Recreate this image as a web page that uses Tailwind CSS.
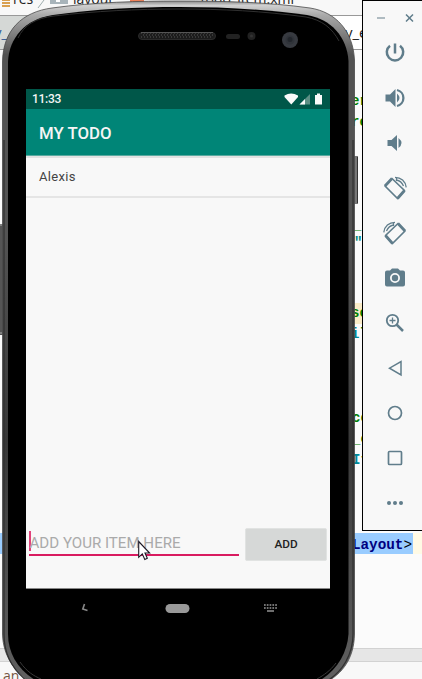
<!DOCTYPE html>
<html lang="en">
<head>
<meta charset="utf-8">
<title>My Todo</title>
<script src="https://cdn.jsdelivr.net/npm/@tailwindcss/browser@4"></script>
</head>
<body class="relative h-[679px] w-[422px] overflow-hidden bg-[#f8f8f8]">

<!-- Code editor window -->
<section class="absolute inset-0 flex flex-col overflow-hidden bg-[#fbfbfb]">
  <div class="relative h-4 shrink-0 border-b border-[#999] bg-[#f8f8f8] font-['Open_Sans',sans-serif] text-[15px] leading-5 text-[#222]">
    <svg class="absolute left-0 top-0" width="150" height="16">
      <path d="M2 0h8M2 3h8M2 6h8" stroke="#d9a050" stroke-width="2"/>
      <path d="M44 0l-6 8" stroke="#9eacad"/>
      <path d="M50 0h18v4H50z" fill="#a8b4ba"/><path d="M56 0h4v2h-4z" fill="#fff"/>
      <path d="M130 0h14v3h-14z" fill="#ee8058"/>
    </svg>
    <span class="absolute -top-[11px] left-[13px] text-[14px]">res</span>
    <span class="absolute -top-[11px] left-[73px] text-[14px]">layout</span>
    <span class="absolute -top-[11px] right-[128px] text-[14px]">todo_item.xml</span>
  </div>
  <div class="flex h-[34px] shrink-0 justify-between border-b border-[#999] bg-white font-['Open_Sans',sans-serif] text-[15px] leading-[33px] text-[#222]">
    <div class="w-40 bg-[#d5d8d6]"><span class="-ml-[6px] text-[#345e98]">y_</span></div>
    <span class="w-[77px]">y_e</span>
  </div>
  <div class="grow font-['Liberation_Mono',monospace] text-[14px] font-bold leading-[21px] text-[#008000]">
    <div class="pt-[41px] *:h-[21px] *:pl-[354px]">
      <div class="-ml-[3px]">er</div>
      <div class="-ml-[3px]">re</div>
      <div></div><div></div><div></div><div></div>
      <div class="-mt-[6px] mb-[1px] -ml-[1px] pt-[4px]">_l</div>
      <div class="mt-0 text-[#00887f]">"</div>
      <div></div><div class="mb-[7px]"></div>
      <div class="bg-[#faecc8]"><span class="-ml-[3px]">sc</span></div>
      <div><span class="-ml-[3px] text-[#008899]">i</span>l</div>
      <div></div><div></div><div></div>
      <div class="-ml-[2px]">cc</div>
      <div class="-ml-[2px]">_c</div>
      <div class="-ml-[2px]"><span class="text-[#008899]">I</span><span class="text-[#92960b]">t</span></div>
    </div>
  </div>
  <div class="absolute left-0 top-[533px] flex h-[21px] w-full bg-[#fffae5]">
    <div class="w-[413px] bg-[#99ccff] pr-px text-right font-['Liberation_Mono',monospace] text-[14.3px] leading-[24px] font-bold text-[#000080]">Layout<span class="font-normal text-black">&gt;</span></div>
  </div>
  <div class="h-[14px] shrink-0 border-y border-[#d2d2d2] bg-[#e6e6e6]"></div>
  <div class="h-[17px] shrink-0 bg-[#f8f8f8] pl-[3px] pt-[4px] font-['Open_Sans',sans-serif] text-[14px] leading-5 text-[#765743]">an</div>
</section>

<!-- Device frame -->
<svg class="absolute inset-0" width="422" height="679" viewBox="0 0 422 679">
  <defs>
    <linearGradient id="rim" x1="0" y1="0" x2="0" y2="679" gradientUnits="userSpaceOnUse">
      <stop offset="0" stop-color="#777"/><stop offset=".008" stop-color="#d0d0d0"/><stop offset=".022" stop-color="#aaa"/><stop offset=".08" stop-color="#535353"/>
      <stop offset=".35" stop-color="#535353"/><stop offset=".65" stop-color="#383838"/><stop offset="1" stop-color="#606060"/>
    </linearGradient>
    <pattern id="mesh" width="3" height="4" patternUnits="userSpaceOnUse"><path d="M0 0h1v2H0zM2 2h1v2H2z" fill="#383838"/></pattern>
  </defs>
  <path d="M0 224h3v111H0z" fill="#555"/><path d="M0 225h2M0 333h2" stroke="#aaa"/>
  <path d="M354 156h4v48h-4z" fill="#777"/><path d="M357.500 157v46" stroke="#333"/>
  <path d="M2.500 62C3 30 22 12 52 8C95 2 139 1 179 1C222 1 267 2 310 8C336 12 353 31 354.500 60V634C354 660 341 677 318 686H38C15 675 3 656 2.500 634Z" fill="url(#rim)" stroke="#4a4a4a" stroke-width=".8"/>
  <path d="M4 140V634C4 655 13 670 27 681M353 140V634C353 655 342 672 327 681" fill="none" stroke="#303030" stroke-width="1.200"/>
  <path d="M8 62C9 38 25 19 53 15C96 9 136 7 179 7C222 7 263 9 307 15C331 19 347 37 348.500 61V634C347 655 335 674 313 684H43C20 674 8 655 8 634Z" fill="#000"/>
  <path d="M18 38C24 25 36 18 54 16C96 11 136 9 179 9C222 9 263 11 306 17C322 20 332 28 339 41" fill="none" stroke="#303030"/>
  <path d="M20 662C27 672 34 676 41 679M336 663C330 671 324 675 317 679" fill="none" stroke="#393939"/>
  <rect x="138.500" y="32.500" width="77" height="7" rx="3.500" fill="#1c1c1c" stroke="#2b2b2b"/><rect x="141" y="33" width="72" height="5" fill="url(#mesh)"/>
  <path d="M141 32.500h72" stroke="#555"/>
  <rect x="226" y="34" width="14" height="5" rx="2.500" fill="#222"/><circle cx="251.500" cy="36" r="4" fill="#222"/><circle cx="251.500" cy="36" r="1.500" fill="#333"/>
  <circle cx="290" cy="40" r="8" fill="#373a40"/><circle cx="290" cy="40" r="4.500" fill="#30343a"/><circle cx="290" cy="39.500" r="2.500" fill="#22262c"/>
  <path d="M84.500 604L82.800 609L87.500 610.500" fill="none" stroke="#888" stroke-width="1.600"/>
  <rect x="165.500" y="604" width="24" height="9" rx="4.500" fill="#999"/>
  <path d="M264 605h13M264 608h13" stroke="#999" stroke-width="1.700" stroke-dasharray="1.700 1.100"/><path d="M267 611h7" stroke="#aaa" stroke-width="1.300"/>
</svg>

<!-- App screen -->
<main class="absolute left-[26px] top-[89px] flex h-[500px] w-[304px] flex-col border-b border-[#888] bg-[#f8f8f8] font-['Roboto',sans-serif]">
  <div class="flex h-5 shrink-0 items-center justify-between bg-[#005749] pl-[6px] pr-[7px] text-[12px] font-medium text-[#f5f5f5]">
    <span class="tracking-[-.3px]">11:33</span>
    <svg width="39" height="12" viewBox="0 0 39 12">
      <path d="M.5 2.500Q7-1.500 14 2.500V4L7.300 11.500L.5 4Z" fill="#fafafa"/>
      <path d="M26 1V11.500H15.500Z" fill="#5d8f85"/><path d="M21 6V11.500H15.500Z" fill="#fafafa"/>
      <path d="M31 2h2V.500h3V2h2v9.500h-7z" fill="#fafafa"/>
    </svg>
  </div>
  <header class="flex h-[47px] shrink-0 items-center border-b border-[#59aaa0] bg-[#008577] pl-[13px] pt-[3px] text-[16.8px] font-medium text-[#f5f5f5]">MY TODO</header>
  <div class="flex h-[42px] shrink-0 items-center border-t-2 border-b-2 border-t-[#e2e2e2] border-b-[#e5e5e5] pl-[13px] text-[13px] tracking-[.3px] text-[#444]">Alexis</div>
  <div class="grow"></div>
  <div class="mb-[27px] flex h-[33px] shrink-0 gap-[6px] pl-[3px] pr-[3px]">
    <div class="mb-[5px] flex grow items-center border-b-2 border-[#d91b60]">
      <span class="mr-[-1px] h-5 w-[1.5px] bg-[#e2427a]"></span>
      <span class="whitespace-nowrap pt-[4px] text-[15.1px] text-[#aaa]">ADD YOUR ITEM HERE</span>
    </div>
    <div class="flex w-[82px] shrink-0 items-center justify-center rounded-[2px] border border-[#e1e3e2] bg-[#d6d8d7] text-[11.8px] font-medium text-[#222]">ADD</div>
  </div>
</main>

<!-- Mouse pointer -->
<svg class="absolute left-[138px] top-[540px]" width="14" height="22" viewBox="0 0 14 22">
  <path d="M.7 1.500V17.300L4.300 13.900L6.800 19.500L9.300 18.300L7 13H11.600Z" fill="#fff" stroke="#1c1824" stroke-width="1.100"/>
</svg>

<!-- Emulator controls -->
<aside class="absolute left-[362px] top-0 flex h-[531px] w-[66px] flex-col items-center border border-black bg-[#f8f8f8]">
  <div class="flex h-[29px] w-full shrink-0 items-center justify-between pl-[14px] pr-[13px] pt-[5px]">
    <svg width="9" height="9"><path d="M0 4h8" stroke="#97a7af" stroke-width="1.500"/></svg>
    <svg width="9" height="9"><path d="M1 .5l7 7M8 .5L1 7.500" stroke="#607d8b" stroke-width="1.500"/></svg>
  </div>
  <div class="flex flex-col gap-[21px] pt-[11px] text-[#607d8b]">
    <svg class="h-6 w-6" viewBox="0 0 24 24" fill="none" stroke="currentColor" stroke-width="2.500"><path d="M12 2.500v10M7 4.700a8.200 8.200 0 1 0 10 0"/></svg>
    <svg class="h-6 w-6" viewBox="0 0 24 24" fill="currentColor"><path d="M2.500 8.500h4.500L12.500 3v18L7 15.500H2.500z"/><path d="M14 7.500q5 4.500 0 9z"/><path d="M14 4a8.200 8.200 0 0 1 0 16" fill="none" stroke="currentColor" stroke-width="2.300"/></svg>
    <svg class="h-6 w-6" viewBox="0 0 24 24" fill="currentColor"><path d="M4.500 9h4L14 4v16l-5.500-5h-4z"/><path d="M15.500 7q6 5 0 10z"/></svg>
    <svg class="h-6 w-6" viewBox="0 0 24 24" fill="none" stroke="currentColor"><path d="M9 2.500L21.500 14.500L14.500 22.500L2 10Z" stroke-width="1.700" stroke-linejoin="round"/><path d="M2 10L9 2.500M14.500 22.500l7-8" stroke-width="2.800"/><path d="M12 1.300c6 0 10.500 4 11.200 10M13.500 2v3M13.500 4c3 .5 5.500 2.500 7 6" stroke-width="1.300"/></svg>
    <svg class="h-6 w-6" viewBox="0 0 24 24" fill="none" stroke="currentColor"><path d="M15 2.500L2.500 14.500L9.500 22.500L22 10Z" stroke-width="1.700" stroke-linejoin="round"/><path d="M22 10L15 2.500M9.500 22.500l-7-8" stroke-width="2.800"/><path d="M12 1.300C6 1.300 1.500 5.300.8 11.300M10.500 2v3M10.500 4C7.500 4.500 5 6.500 3.500 10" stroke-width="1.300"/></svg>
    <svg class="h-6 w-6" viewBox="0 0 24 24" fill="currentColor"><path fill-rule="evenodd" d="M4 4.500h3l2-2h6l2 2h3q2 0 2 2v12q0 2-2 2H4q-2 0-2-2V6.500q0-2 2-2zM12 7a5 5 0 1 0 0 10a5 5 0 0 0 0-10z"/><circle cx="12" cy="12" r="3.200"/></svg>
    <svg class="h-6 w-6" viewBox="0 0 24 24" fill="none" stroke="currentColor" stroke-width="1.800"><circle cx="9.500" cy="9.500" r="5.700"/><path d="M13.500 13.500l6.500 6.500" stroke-width="2.500"/><path d="M9.500 6.500v6M6.500 9.500h6" stroke-width="1.300"/></svg>
    <svg class="h-6 w-6" viewBox="0 0 24 24" fill="none" stroke="currentColor" stroke-width="1.500"><path d="M18 5.500v13.500L6.500 12.200z"/></svg>
    <svg class="h-6 w-6" viewBox="0 0 24 24" fill="none" stroke="currentColor" stroke-width="1.700"><circle cx="12" cy="12" r="6.500"/></svg>
    <svg class="h-6 w-6" viewBox="0 0 24 24" fill="none" stroke="currentColor" stroke-width="1.700"><rect x="5.500" y="5.500" width="13" height="13" rx="1"/></svg>
    <svg class="h-6 w-6" viewBox="0 0 24 24" fill="currentColor"><circle cx="6" cy="12" r="2"/><circle cx="12" cy="12" r="2"/><circle cx="18" cy="12" r="2"/></svg>
  </div>
</aside>
</body>
</html>
